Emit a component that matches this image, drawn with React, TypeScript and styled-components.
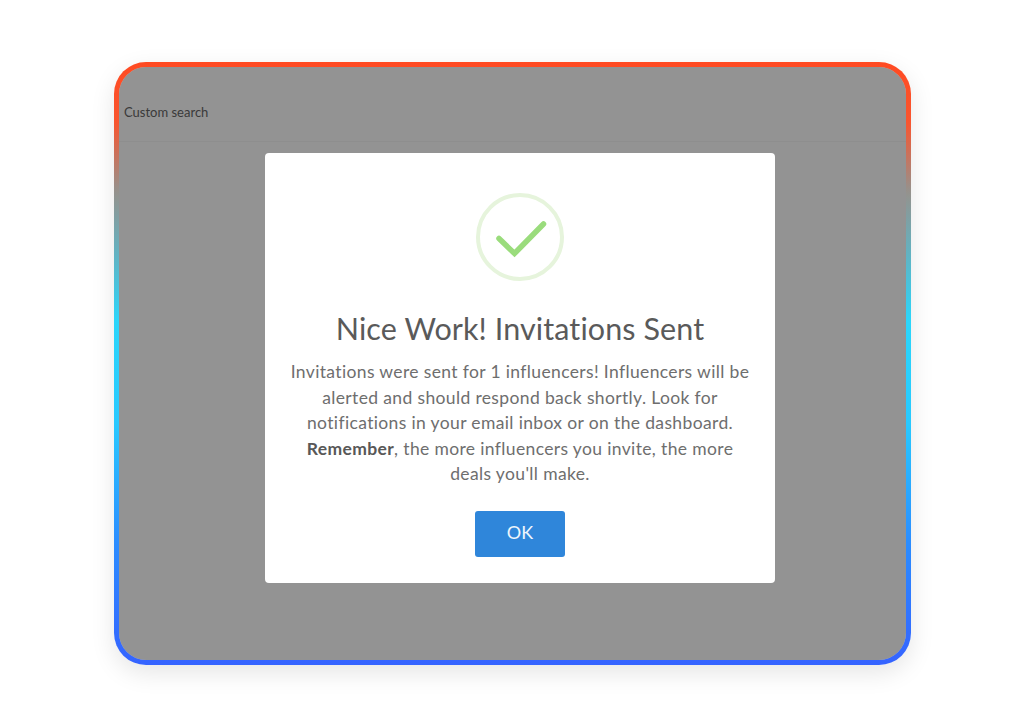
import React from "react";
import styled, { createGlobalStyle } from "styled-components";

const Global = createGlobalStyle`
  html, body { margin: 0; padding: 0; background: #fff; }
  body { font-family: "Lato", "Open Sans", sans-serif; }
`;

const Page = styled.div`
  width: 1024px;
  height: 727px;
  padding: 62px 113px 62px 114px;
  box-sizing: border-box;
  background: #fff;
  overflow: hidden;
`;

const Frame = styled.div`
  position: relative;
  width: 797px;
  height: 603px;
  box-sizing: border-box;
  border: 5px solid transparent;
  border-radius: 32px;
  background:
    linear-gradient(#fff, #fff) padding-box,
    linear-gradient(180deg, #ff4a22 0%, #f9552f 10%, #98908a 21%, #2bd6fb 43%, #28c9ff 60%, #2b8cff 80%, #3563ff 100%) border-box;
  box-shadow: 0 8px 24px rgba(0, 0, 0, 0.1);
`;

const Header = styled.div`
  height: 75px;
  display: flex;
  align-items: center;
  padding: 16px 0 0 5px;
  box-sizing: border-box;
  border-bottom: 1px solid #f7f7f7;
  font-size: 13px;
  color: #666;
`;

const Overlay = styled.div`
  position: absolute;
  inset: 0;
  border-radius: 27px;
  background: rgba(0, 0, 0, 0.425);
  display: flex;
  justify-content: center;
  padding: 86px 0 0 15px;
  box-sizing: border-box;
`;

const Modal = styled.div`
  width: 510px;
  height: 430px;
  background: #fff;
  border-radius: 4px;
  box-sizing: border-box;
  padding: 40px 20px 0;
  display: flex;
  flex-direction: column;
  align-items: center;
`;

const Icon = styled.svg`
  width: 88px;
  height: 88px;
  display: block;
  flex: none;
`;

const Title = styled.h2`
  margin: 27px 0 0;
  font-size: 30.5px;
  line-height: 40px;
  font-weight: 400;
  color: #5a5a5a;
  letter-spacing: 0.1px;
  white-space: nowrap;
`;

const Body = styled.p`
  margin: 11px 0 0;
  width: 470px;
  font-size: 17.5px;
  line-height: 25.5px;
  color: #6e6e6e;
  text-align: center;
  letter-spacing: 0.36px;
`;

const Line = styled.span`
  display: block;
  white-space: nowrap;
`;

const Strong = styled.strong`
  font-weight: 700;
  color: #585858;
`;

const OkButton = styled.button`
  margin-top: 24px;
  width: 90px;
  height: 46px;
  border: none;
  border-radius: 3px;
  background: #2f86da;
  color: #eef5fc;
  font-family: inherit;
  font-size: 18px;
  padding: 0 0 4px;
`;

export default function App() {
  return (
    <Page>
      <Global />
      <Frame>
        <Header>Custom search</Header>
        <Overlay>
          <Modal>
            <Icon viewBox="0 0 88 88" fill="none">
              <circle cx="44" cy="44" r="42" stroke="#e6f4dc" strokeWidth="4" />
              <path d="M23 45.5 L38.5 60.5 L67.5 31" stroke="#9adc7c" strokeWidth="5.5" strokeLinecap="round" strokeLinejoin="miter" />
            </Icon>
            <Title>Nice Work! Invitations Sent</Title>
            <Body>
              <Line>Invitations were sent for 1 influencers! Influencers will be</Line>
              <Line>alerted and should respond back shortly. Look for</Line>
              <Line>notifications in your email inbox or on the dashboard.</Line>
              <Line><Strong>Remember</Strong>, the more influencers you invite, the more</Line>
              <Line>deals you'll make.</Line>
            </Body>
            <OkButton>OK</OkButton>
          </Modal>
        </Overlay>
      </Frame>
    </Page>
  );
}
